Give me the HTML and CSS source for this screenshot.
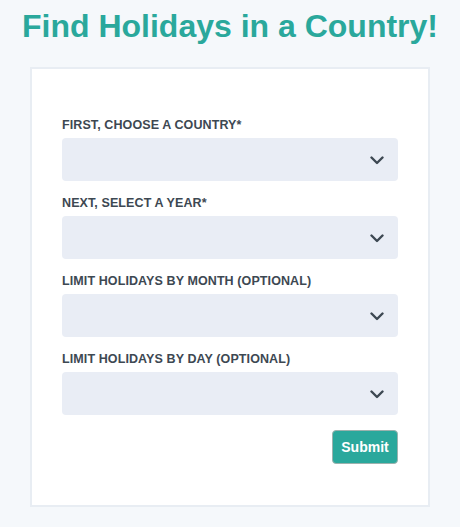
FILE: index.html
```html
<!DOCTYPE html>
<html>
<head>
<meta charset="utf-8">
<link rel="stylesheet" href="styles.css">
</head>
<body>
<h1 class="title">Find Holidays in a Country!</h1>
<form class="card">
  <div class="field">
    <label class="label">First, choose a country*</label>
    <div class="select"><svg class="chev" width="14" height="9" viewBox="0 0 14 9"><path d="M1.5 1.5 L7 7 L12.5 1.5" fill="none" stroke="#3d4852" stroke-width="2.4" stroke-linecap="round" stroke-linejoin="round"/></svg></div>
  </div>
  <div class="field">
    <label class="label">Next, select a year*</label>
    <div class="select"><svg class="chev" width="14" height="9" viewBox="0 0 14 9"><path d="M1.5 1.5 L7 7 L12.5 1.5" fill="none" stroke="#3d4852" stroke-width="2.4" stroke-linecap="round" stroke-linejoin="round"/></svg></div>
  </div>
  <div class="field">
    <label class="label">Limit holidays by month (optional)</label>
    <div class="select"><svg class="chev" width="14" height="9" viewBox="0 0 14 9"><path d="M1.5 1.5 L7 7 L12.5 1.5" fill="none" stroke="#3d4852" stroke-width="2.4" stroke-linecap="round" stroke-linejoin="round"/></svg></div>
  </div>
  <div class="field">
    <label class="label">Limit holidays by day (optional)</label>
    <div class="select"><svg class="chev" width="14" height="9" viewBox="0 0 14 9"><path d="M1.5 1.5 L7 7 L12.5 1.5" fill="none" stroke="#3d4852" stroke-width="2.4" stroke-linecap="round" stroke-linejoin="round"/></svg></div>
  </div>
  <div class="actions">
    <button type="button" class="submit">Submit</button>
  </div>
</form>
</body>
</html>
```
FILE: styles.css
```css
html, body {
  margin: 0;
  padding: 0;
  background: #f5f8fb;
  font-family: "Liberation Sans", Arial, sans-serif;
}
body {
  padding-top: 8px;
}
.title {
  margin: 0;
  text-align: center;
  color: #2aa89c;
  font-size: 32px;
  font-weight: 700;
  line-height: 37px;
}
.card {
  box-sizing: border-box;
  width: 400px;
  margin: 22px auto 0;
  background: #fff;
  border: 2px solid #e8edf3;
  padding: 49px 30px 41px;
  display: flex;
  flex-direction: column;
  gap: 15px;
}
.field {
  display: flex;
  flex-direction: column;
}
.label {
  font-size: 12.5px;
  font-weight: 700;
  text-transform: uppercase;
  color: #3d4852;
  line-height: 15px;
  margin-bottom: 5px;
  letter-spacing: 0.1px;
}
.select {
  height: 43px;
  background: #e9edf5;
  border-radius: 4px;
  display: flex;
  align-items: center;
  justify-content: flex-end;
  padding-right: 14px;
}
.chev {
  display: block;
  margin-top: 1px;
}
.actions {
  display: flex;
  justify-content: flex-end;
}
.submit {
  width: 66px;
  height: 34px;
  background: #2aa89c;
  color: #fff;
  font-family: "Liberation Sans", Arial, sans-serif;
  font-weight: 700;
  font-size: 14px;
  border: 1px solid #9cb2ae;
  border-radius: 4px;
  padding: 0;
}
```
